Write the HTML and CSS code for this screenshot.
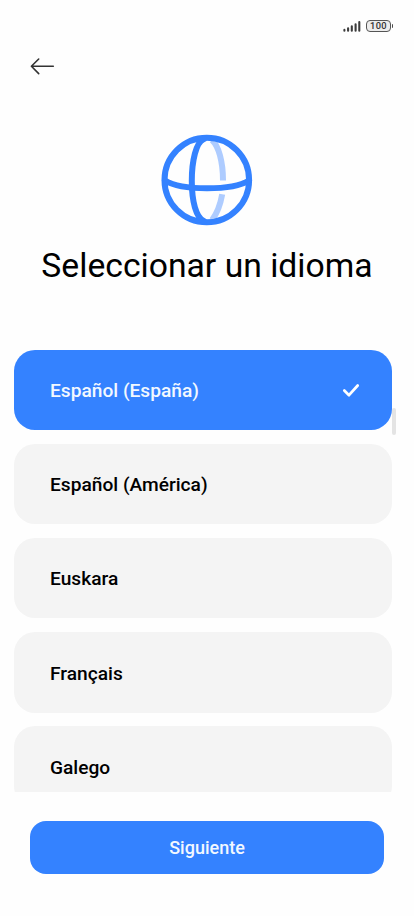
FILE: index.html
```html
<!DOCTYPE html>
<html lang="es">
<head>
<meta charset="utf-8">
<meta name="viewport" content="width=device-width, initial-scale=1">
<title>Seleccionar un idioma</title>
<link rel="stylesheet" href="styles.css">
</head>
<body>
<div class="screen">
  <div class="status">
    <svg class="signal" width="18" height="12" viewBox="0 0 18 12"><path d="M1.4 9.9v.9M5.1 8.2v2.6M8.8 6.3v4.5M12.6 4.3v6.5M16.3 2v8.8"/></svg>
    <div class="battery">100</div>
  </div>
  <header class="nav">
    <svg class="back" width="26" height="20" viewBox="0 0 26 20"><path d="M24.3 10.3H2.5M9.7 3 2.4 10.3l7.3 7.3"/></svg>
  </header>
  <svg class="globe" width="92" height="92" viewBox="0 0 92 92">
    <path class="far" d="M51 6C57.5 12 62 27 62 46.5"/>
    <path class="far" d="M61.2 60.3C59.5 70 56.5 79 51 86"/>
    <circle cx="45.8" cy="46" r="42.3"/>
    <path d="M43 5C35 8 30.8 27 30.8 47S35 84 43 87"/>
    <path d="M4 46.5C12 51.5 29 54.3 46 54.3S80 51.5 88 46.5"/>
  </svg>
  <h1 class="title">Seleccionar un idioma</h1>
  <main class="list">
    <div class="item selected"><span>Español (España)</span>
      <svg width="18" height="15" viewBox="0 0 18 15"><path d="M2.3 7.5 7 12.2 15.7 2.5"/></svg>
    </div>
    <div class="item"><span>Español (América)</span></div>
    <div class="item"><span>Euskara</span></div>
    <div class="item"><span>Français</span></div>
    <div class="item"><span>Galego</span></div>
    <div class="scrollbar"></div>
  </main>
  <button class="next">Siguiente</button>
</div>
</body>
</html>
```

FILE: styles.css
```css
* { box-sizing: border-box; }
body { margin: 0; background: #fff; font-family: Roboto, sans-serif; color: #000; }
.screen { width: 414px; height: 916px; overflow: hidden; display: flex; flex-direction: column; background: #fefefe; }
svg { display: block; flex: none; fill: none; stroke-linecap: round; stroke-linejoin: round; }
.status { height: 40px; flex: none; display: flex; justify-content: flex-end; align-items: flex-start; gap: 5px; padding: 20px 23px 0 0; }
.signal { stroke: #3c3c3c; stroke-width: 2.1; }
.battery { position: relative; width: 25px; height: 12px; border: 1.3px solid #555; border-radius: 4px; background: #ececec; font-size: 9.3px; line-height: 10.5px; font-weight: 500; text-align: center; color: #333; letter-spacing: .3px; }
.battery::after { content: ""; position: absolute; right: -3px; top: 3px; width: 1.5px; height: 4px; background: #4a4a4a; border-radius: 0 1px 1px 0; }
.nav { height: 94px; flex: none; padding: 16px 0 0 29px; }
.back { stroke: #333; stroke-width: 1.6; }
.globe { margin-left: 161px; stroke: #3482ff; stroke-width: 6; }
.globe .far { stroke: #aeccff; stroke-linecap: butt; }
.title { margin: 20px 0 0; height: 40px; flex: none; line-height: 40px; text-align: center; font-size: 33.7px; font-weight: 400; white-space: nowrap; }
.list { position: relative; height: 442px; flex: none; margin-top: 63.5px; padding: 0 22.3px 0 14px; display: flex; flex-direction: column; gap: 13.9px; overflow: hidden; }
.item { height: 80.35px; flex: none; border-radius: 21px; background: #f4f4f4; padding: 1.4px 32px 0 36px; display: flex; align-items: center; justify-content: space-between; font-size: 19.15px; font-weight: 500; }
.item.selected { background: #3482ff; color: #f2f8ff; }
.item svg { stroke: #fff; stroke-width: 2.7; }
.scrollbar { position: absolute; left: 392px; top: 58.5px; width: 4px; height: 27px; border-radius: 2px; background: #e4e4e4; }
.next { width: 354px; height: 53px; flex: none; margin: 29.5px 0 0 30px; padding: 0; border: 0; border-radius: 16px; background: #3482ff; color: #f2f8ff; font: 500 18px Roboto, sans-serif; }
```
